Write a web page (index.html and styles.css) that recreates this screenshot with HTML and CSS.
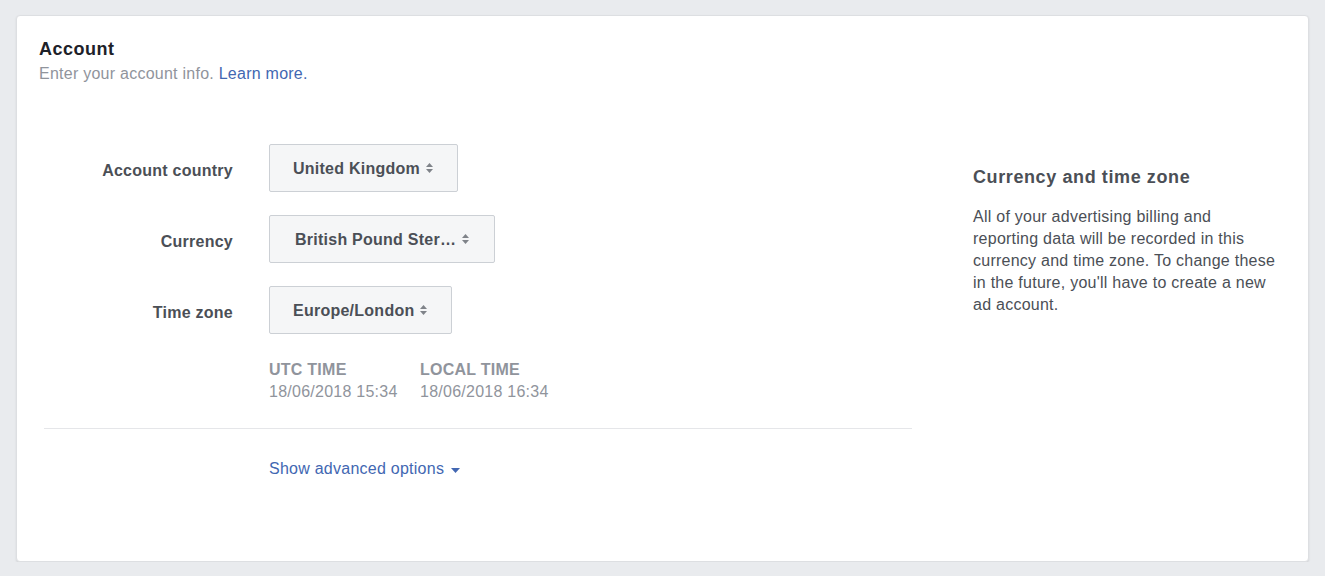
FILE: index.html
```html
<!DOCTYPE html>
<html lang="en">
<head>
  <meta charset="UTF-8">
  <meta name="viewport" content="width=device-width, initial-scale=1.0">
  <title>Account</title>
  <link rel="stylesheet" href="styles.css">
</head>
<body>
  <div class="card">
    <div class="card-header">
      <h1>Account</h1>
      <p class="subtitle">Enter your account info. <a href="#">Learn more.</a></p>
    </div>

    <div class="card-body">
      <div class="form-column">
        <div class="form-row">
          <label>Account country</label>
          <button class="select">United Kingdom
            <svg class="arrows" width="7" height="10" viewBox="0 0 7 10"><path d="M0 4L3.5 0L7 4Z M0 6L7 6L3.5 10Z"/></svg>
          </button>
        </div>
        <div class="form-row">
          <label>Currency</label>
          <button class="select wide">British Pound Ster…
            <svg class="arrows" width="7" height="10" viewBox="0 0 7 10"><path d="M0 4L3.5 0L7 4Z M0 6L7 6L3.5 10Z"/></svg>
          </button>
        </div>
        <div class="form-row">
          <label>Time zone</label>
          <button class="select">Europe/London
            <svg class="arrows" width="7" height="10" viewBox="0 0 7 10"><path d="M0 4L3.5 0L7 4Z M0 6L7 6L3.5 10Z"/></svg>
          </button>
        </div>
        <div class="form-row time-row">
          <span></span>
          <div class="times">
            <div class="time">
              <div class="time-title">UTC TIME</div>
              <div>18/06/2018 15:34</div>
            </div>
            <div class="time">
              <div class="time-title">LOCAL TIME</div>
              <div>18/06/2018 16:34</div>
            </div>
          </div>
        </div>

        <hr class="divider">

        <div class="form-row">
          <span></span>
          <a href="#" class="advanced">Show advanced options
            <svg width="9" height="5" viewBox="0 0 9 5"><path d="M0 0L9 0L4.5 5Z"/></svg>
          </a>
        </div>
      </div>

      <div class="info-column">
        <h2>Currency and time zone</h2>
        <p>All of your advertising billing and reporting data will be recorded in this currency and time zone. To change these in the future, you'll have to create a new ad account.</p>
      </div>
    </div>
  </div>
</body>
</html>
```

FILE: styles.css
```css
body {
  font-family: "Liberation Sans", Arial, sans-serif;
  background-color: #e9ebee;
  margin: 0;
  padding: 15px 16px 0 16px;
  color: #4b4f56;
  letter-spacing: 0.25px;
}

.card {
  background-color: #fff;
  border: 1px solid #dddfe2;
  border-radius: 4px;
  box-shadow: 0 1px 2px rgba(0, 0, 0, 0.1);
  height: 547px;
  box-sizing: border-box;
}

.card-header {
  padding: 22px 22px 0 22px;
}

h1 {
  font-size: 18px;
  line-height: 22px;
  font-weight: bold;
  color: #1d2129;
  letter-spacing: 0.5px;
  margin: 0;
}

.subtitle {
  font-size: 16px;
  line-height: 20px;
  color: #90949c;
  margin: 4px 0 0 0;
}

a {
  color: #4267b2;
  text-decoration: none;
}

.card-body {
  display: flex;
  gap: 61px;
  margin-top: 60px;
  padding-left: 27px;
}

.form-column {
  width: 868px;
}

.form-row {
  display: grid;
  grid-template-columns: 189px auto;
  column-gap: 36px;
  align-items: center;
  justify-items: start;
  margin-bottom: 23px;
}

.form-row label {
  justify-self: end;
  font-size: 16px;
  font-weight: bold;
  color: #4b4f56;
  padding-top: 6px;
}

.select {
  display: flex;
  align-items: center;
  gap: 6px;
  height: 48px;
  padding: 2px 24px 0 23px;
  background-color: #f5f6f7;
  border: 1px solid #ccd0d5;
  border-radius: 2px;
  font-family: inherit;
  font-size: 16px;
  font-weight: bold;
  letter-spacing: 0.25px;
  color: #4b4f56;
  cursor: pointer;
}

.select.wide {
  padding-left: 25px;
  padding-right: 25px;
}

.arrows {
  fill: #7f8389;
  margin-top: -3px;
}

.time-row {
  margin-bottom: 21px;
}

.times {
  display: flex;
  font-size: 16px;
  line-height: 22px;
  color: #90949c;
  padding-top: 2px;
}

.time {
  width: 151px;
}

.time-title {
  font-weight: bold;
}

.divider {
  border: none;
  border-top: 1px solid #e5e6e9;
  margin: -23px 0 28px 0;
  position: relative;
  top: 27px;
}

.form-row:last-child {
  margin-top: 56px;
}

.advanced {
  font-size: 16px;
  line-height: 22px;
  display: flex;
  align-items: center;
  gap: 7px;
}

.advanced svg {
  fill: #4267b2;
  margin-top: 2px;
}

.info-column {
  width: 306px;
  padding-top: 22px;
}

h2 {
  font-size: 18px;
  line-height: 22px;
  font-weight: bold;
  color: #4b4f56;
  letter-spacing: 0.6px;
  margin: 0;
}

.info-column p {
  font-size: 16px;
  line-height: 22px;
  margin: 18px 0 0 0;
}
```
